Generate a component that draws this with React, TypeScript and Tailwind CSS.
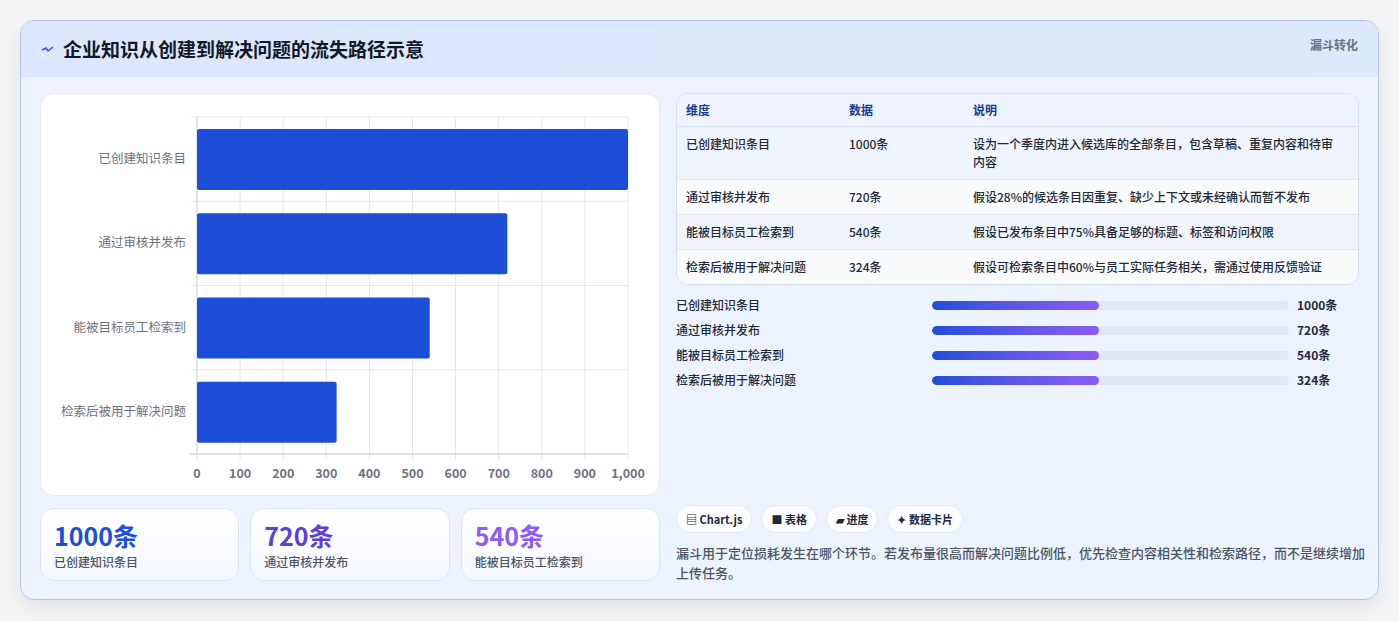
import React from "react";

const F = { fontFamily: '"Noto Sans CJK SC", "Noto Sans", sans-serif' };
const cats = [
  { n: "已创建知识条目", v: 1000 },
  { n: "通过审核并发布", v: 720 },
  { n: "能被目标员工检索到", v: 540 },
  { n: "检索后被用于解决问题", v: 324 },
];
const rows = [
  ["已创建知识条目", "1000条", "设为一个季度内进入候选库的全部条目，包含草稿、重复内容和待审内容"],
  ["通过审核并发布", "720条", "假设28%的候选条目因重复、缺少上下文或未经确认而暂不发布"],
  ["能被目标员工检索到", "540条", "假设已发布条目中75%具备足够的标题、标签和访问权限"],
  ["检索后被用于解决问题", "324条", "假设可检索条目中60%与员工实际任务相关，需通过使用反馈验证"],
];

function Chart() {
  const x0 = 156, x1 = 587, y0 = 23, y1 = 360;
  const band = (y1 - y0) / 4;
  const sx = (v: number) => x0 + ((x1 - x0) * v) / 1000;
  return (
    <svg width="619" height="402" style={F}>
      {Array.from({ length: 11 }).map((_, i) => (
        <g key={i}>
          <line x1={sx(i * 100)} x2={sx(i * 100)} y1={y0} y2={y1 + 6} stroke="#e5e7eb" />
          <text x={sx(i * 100)} y={384} fontSize="12.5" fill="#6b7280" textAnchor="middle" fontWeight="600">
            {i === 10 ? "1,000" : i * 100}
          </text>
        </g>
      ))}
      {[0, 1, 2, 3, 4].map((i) => (
        <line key={i} x1={x0 - 6} x2={x1} y1={y0 + band * i} y2={y0 + band * i} stroke="#e5e7eb" />
      ))}
      <line x1={x0 - 8} x2={x1} y1={y1} y2={y1} stroke="#cbd5e1" />
      <line x1={x0} x2={x0} y1={y0} y2={y1} stroke="#cbd5e1" />
      {cats.map((c, i) => (
        <g key={i}>
          <rect x={x0} y={y0 + band * i + 12} width={sx(c.v) - x0} height={61} fill="#1d4ed8" rx="2" />
          <text x={145} y={y0 + band * i + band / 2 + 4} fontSize="12.5" fill="#6b7280" textAnchor="end">
            {c.n}
          </text>
        </g>
      ))}
    </svg>
  );
}

export default function App() {
  return (
    <div className="w-[1399px] h-[621px] bg-[#f3f4f6] p-[20px] pb-0" style={F}>
      <div className="w-[1359px] h-[580px] rounded-[14px] border border-[#b7c4ec] overflow-hidden bg-gradient-to-b from-[#eef3fe] to-[#edf4ff] shadow-[0_6px_16px_rgba(0,0,0,0.08)]">
        <div className="h-[56px] bg-gradient-to-r from-[#dde6fc] to-[#dce8fc] flex items-start justify-between pl-[20px] pr-[20px]">
          <div className="flex items-center gap-[8px] h-[56px]">
            <svg width="14" height="10" viewBox="0 0 14 10"><path d="M1 6 L5 4 L7 7 L12 3" stroke="#4f46e5" strokeWidth="1.4" fill="none" /></svg>
            <span className="text-[19px] font-bold text-[#111827]">企业知识从创建到解决问题的流失路径示意</span>
          </div>
          <span className="text-[12px] font-semibold text-[#6b7280] mt-[15px]">漏斗转化</span>
        </div>
        <div className="flex gap-[16px] px-[19px] pt-[16px]">
          <div className="w-[620px] flex flex-col gap-[12px]">
            <div className="h-[403px] bg-white rounded-[14px] border border-[#e3e9f5]">
              <Chart />
            </div>
            <div className="grid grid-cols-3 gap-[11px]">
              {[
                ["1000条", "已创建知识条目", "text-[#1d4ed8]"],
                ["720条", "通过审核并发布", "text-[#5b3fd8]"],
                ["540条", "能被目标员工检索到", "text-[#8b5cf6]"],
              ].map(([v, l, c]) => (
                <div key={l} className="h-[73px] rounded-[14px] border border-[#dde5f5] bg-gradient-to-b from-white to-[#f5f8ff] px-[13px] pt-[10px]">
                  <div className={`text-[25px] font-bold leading-[32px] ${c}`}>{v}</div>
                  <div className="text-[12px] text-[#4b5563] mt-[2px] font-medium">{l}</div>
                </div>
              ))}
            </div>
          </div>
          <div className="flex-1 flex flex-col">
            <div className="rounded-[12px] border border-[#d8e0ef] overflow-hidden text-[12px] text-[#1f2937]">
              <div className="flex h-[33px] items-center bg-[#eef3fd] border-b border-[#d8e0ef] text-[#1e3a8a] font-semibold">
                <div className="w-[172px] pl-[9px]">维度</div>
                <div className="w-[124px]">数据</div>
                <div>说明</div>
              </div>
              {rows.map((r, i) => (
                <div key={i} className={`flex py-[8px] ${i > 0 ? "border-t border-[#e3e9f3]" : ""} ${i % 2 ? "bg-[#f8fafc]" : "bg-[#f0f5fd]"}`}>
                  <div className="w-[172px] pl-[9px] leading-[18px] font-medium">{r[0]}</div>
                  <div className="w-[124px] leading-[18px] font-medium">{r[1]}</div>
                  <div className="flex-1 pr-[14px] leading-[18px] font-medium">{r[2]}</div>
                </div>
              ))}
            </div>
            <div className="flex flex-col gap-[7px] mt-[11px]">
              {cats.map((c) => (
                <div key={c.n} className="flex items-center h-[18px] text-[12px] font-medium text-[#1f2937]">
                  <div className="w-[256px]">{c.n}</div>
                  <div className="w-[357px] h-[9px] rounded-full bg-[#e2e8f0] overflow-hidden">
                    <div className="w-[167px] h-full rounded-full bg-gradient-to-r from-[#1d4ed8] to-[#8b5cf6]" />
                  </div>
                  <div className="ml-[8px] font-bold">{c.v}条</div>
                </div>
              ))}
            </div>
            <div className="flex gap-[9px] mt-[116px]">
              {["▤ Chart.js", "■ 表格", "▰ 进度", "✦ 数据卡片"].map((t) => (
                <div key={t} className="h-[28px] px-[9px] flex items-center rounded-full bg-white/80 border border-[#e3e9f5] text-[11px] font-semibold text-[#1f2937]">{t}</div>
              ))}
            </div>
            <p className="mt-[10px] text-[13px] leading-[20px] text-[#4b5563] font-medium mr-[-6px]">
              漏斗用于定位损耗发生在哪个环节。若发布量很高而解决问题比例低，优先检查内容相关性和检索路径，而不是继续增加上传任务。
            </p>
          </div>
        </div>
      </div>
    </div>
  );
}
